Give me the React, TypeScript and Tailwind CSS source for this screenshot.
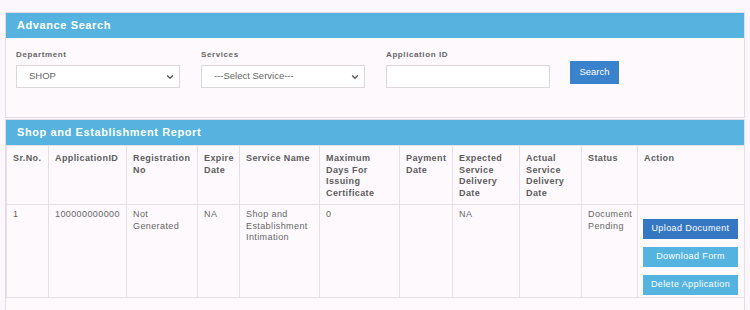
import { ChevronDown } from "lucide-react";

const columns = [
  { label: "Sr.No.", w: 42 },
  { label: "ApplicationID", w: 78 },
  { label: "Registration No", w: 71 },
  { label: "Expire Date", w: 42 },
  { label: "Service Name", w: 80 },
  { label: "Maximum Days For Issuing Certificate", w: 80 },
  { label: "Payment Date", w: 53 },
  { label: "Expected Service Delivery Date", w: 67 },
  { label: "Actual Service Delivery Date", w: 62 },
  { label: "Status", w: 56 },
  { label: "Action", w: 107 },
];

const row = [
  "1",
  "100000000000",
  "Not Generated",
  "NA",
  "Shop and Establishment Intimation",
  "0",
  "",
  "NA",
  "",
  "Document Pending",
];

function SelectBox({ value, options }: { value: string; options: string[] }) {
  return (
    <div className="relative w-[164px]">
      <select
        defaultValue={value}
        className="block h-[23px] w-full appearance-none border border-[#dcd6db] bg-white pl-3 text-[9.5px] text-[#666] outline-0"
      >
        {options.map((o) => (
          <option key={o}>{o}</option>
        ))}
      </select>
      <ChevronDown
        size={10}
        strokeWidth={3}
        className="pointer-events-none absolute right-[5px] top-[7px] text-[#555]"
      />
    </div>
  );
}

function Label({ children }: { children: string }) {
  return (
    <div className="mb-[6px] text-[8px] leading-[8px] font-bold tracking-[0.6px] text-[#666]">
      {children}
    </div>
  );
}

export default function App() {
  return (
    <div
      className="h-[310px] w-[750px] overflow-hidden bg-[#fcf7fc] px-[5px] pt-[12px]"
      style={{ fontFamily: '"Liberation Sans", Arial, sans-serif' }}
    >
      <div className="border border-[#e2dbe1] bg-[#fdf9fd]">
        <div className="flex h-[25px] items-center bg-[#56b3e0] px-[11px] text-[11px] font-bold tracking-[0.6px] text-white">
          Advance Search
        </div>
        <div className="flex h-[79px] items-start gap-[21px] px-[10px] pt-[13px]">
          <div>
            <Label>Department</Label>
            <SelectBox value="SHOP" options={["SHOP"]} />
          </div>
          <div>
            <Label>Services</Label>
            <SelectBox value="---Select Service---" options={["---Select Service---"]} />
          </div>
          <div>
            <Label>Application ID</Label>
            <input
              type="text"
              className="block h-[23px] w-[164px] border border-[#dcd6db] bg-white px-2 text-[9.5px] outline-0"
            />
          </div>
          <button className="ml-[-1px] mt-[10px] h-[23px] w-[49px] bg-[#3a82cb] text-[9.5px] text-white">
            Search
          </button>
        </div>
      </div>

      <div className="mt-[1px] border border-[#e2dbe1] bg-[#fdf9fd] pb-[20px]">
        <div className="flex h-[25px] items-center bg-[#56b3e0] px-[11px] text-[11px] font-bold tracking-[0.6px] text-white">
          Shop and Establishment Report
        </div>
        <table className="w-[738px] table-fixed border-collapse text-[9px] tracking-[0.4px]">
          <colgroup>
            {columns.map((c) => (
              <col key={c.label} style={{ width: c.w }} />
            ))}
          </colgroup>
          <thead>
            <tr className="h-[59px]">
              {columns.map((c) => (
                <th
                  key={c.label}
                  className="border border-[#e6dfe5] px-[6px] pt-[7px] text-left align-top font-bold leading-[11.7px] text-[#5c5c5c]"
                >
                  {c.label}
                </th>
              ))}
            </tr>
          </thead>
          <tbody>
            <tr className="h-[93px]">
              {row.map((v, i) => (
                <td
                  key={i}
                  className="border border-[#e6dfe5] px-[6px] pt-[4px] align-top leading-[11.7px] text-[#666]"
                >
                  {v}
                </td>
              ))}
              <td className="border border-[#e6dfe5] pl-[5px] pt-[14px] align-top">
                <div className="flex flex-col gap-[8px]">
                  <button className="h-[20px] w-[95px] bg-[#3677c3] text-[9px] tracking-[0.4px] text-white">
                    Upload Document
                  </button>
                  <button className="h-[20px] w-[95px] bg-[#55b3e0] text-[9px] tracking-[0.4px] text-white">
                    Download Form
                  </button>
                  <button className="h-[20px] w-[95px] bg-[#55b3e0] text-[9px] tracking-[0.4px] text-white">
                    Delete Application
                  </button>
                </div>
              </td>
            </tr>
          </tbody>
        </table>
      </div>
    </div>
  );
}
